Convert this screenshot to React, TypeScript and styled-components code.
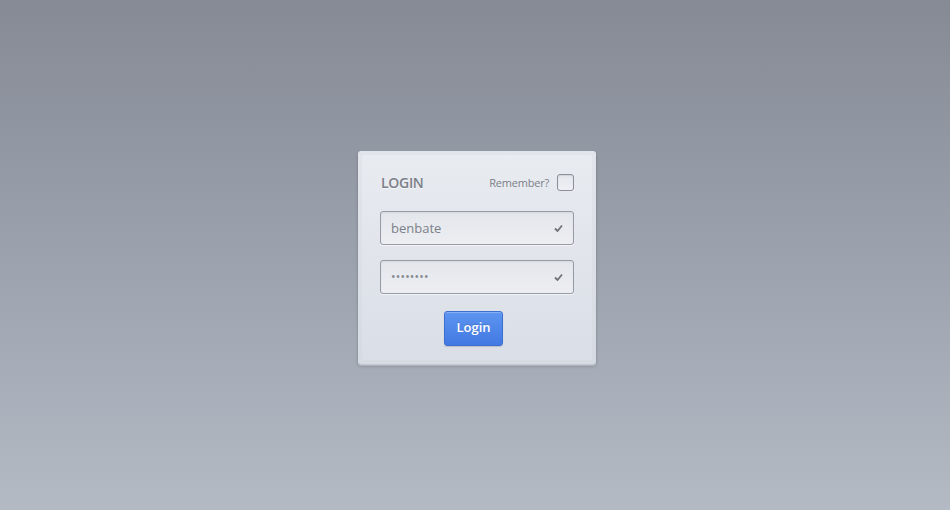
import React from "react";
import styled, { createGlobalStyle } from "styled-components";

const Global = createGlobalStyle`
  html, body { margin: 0; padding: 0; }
  body {
    width: 950px;
    height: 510px;
    overflow: hidden;
    font-family: "Open Sans", "DejaVu Sans", sans-serif;
    background: linear-gradient(180deg, #858a95 0%, #9ca2ad 50%, #b4bac4 100%);
  }
`;

const Page = styled.div`
  width: 950px;
  height: 510px;
  box-sizing: border-box;
  padding: 151px 0 0 358px;
`;

const Card = styled.div`
  width: 238px;
  height: 213px;
  box-sizing: border-box;
  padding: 4px;
  border-radius: 3px;
  background: linear-gradient(180deg, #e2e5eb 0%, #d6dae2 100%);
  box-shadow:
    0 1px 0 #c4c8d0,
    0 2px 0 #aeb3bc,
    0 2px 3px rgba(40, 45, 60, 0.35);
`;

const Inner = styled.form`
  height: 100%;
  box-sizing: border-box;
  padding: 19px 18px 14px;
  border-radius: 2px;
  background: linear-gradient(180deg, #e8ebf0 0%, #dadee6 100%);
  display: flex;
  flex-direction: column;
`;

const Header = styled.div`
  display: flex;
  align-items: center;
  justify-content: space-between;
  height: 17px;
  padding-left: 1px;
`;

const Title = styled.h1`
  margin: 0;
  font-size: 14px;
  font-weight: 600;
  color: #7b7f88;
  letter-spacing: -0.3px;
  text-shadow: 0 1px 0 rgba(255, 255, 255, 0.6);
`;

const Remember = styled.label`
  display: flex;
  align-items: center;
  gap: 8px;
  font-size: 11px;
  color: #7c8089;
  letter-spacing: -0.2px;
`;

const Box = styled.span`
  width: 15px;
  height: 15px;
  border: 1px solid #8a8f99;
  border-radius: 3px;
  background: linear-gradient(180deg, #e4e7ec, #eef0f4);
  box-shadow: inset 0 1px 1px rgba(0, 0, 0, 0.08);
`;

const Field = styled.div<{ $top: number }>`
  margin-top: ${(p) => p.$top}px;
  height: 34px;
  box-sizing: border-box;
  border: 1px solid #969ba5;
  border-radius: 3px;
  background: linear-gradient(180deg, #e3e6eb 0%, #eceef2 100%);
  box-shadow: inset 0 1px 2px rgba(0, 0, 0, 0.06), 0 1px 0 rgba(255, 255, 255, 0.6);
  display: flex;
  align-items: center;
  padding: 0 10px 0 10px;
`;

const Value = styled.span<{ $dots?: boolean }>`
  flex: 1;
  font-size: ${(p) => (p.$dots ? "12px" : "13px")};
  color: ${(p) => (p.$dots ? "#868a93" : "#7d818a")};
  letter-spacing: ${(p) => (p.$dots ? "0.2px" : "0")};
  padding-bottom: ${(p) => (p.$dots ? "1px" : "0")};
`;

const Check = styled.svg`
  width: 9px;
  height: 8px;
  color: #6e727b;
`;

const Actions = styled.div`
  margin-top: 17px;
  display: flex;
  padding-left: 64px;
`;

const Button = styled.button`
  width: 59px;
  height: 35px;
  box-sizing: border-box;
  border: 1px solid #3d6fd0;
  border-radius: 3px;
  background: linear-gradient(180deg, #5d95f0 0%, #4279e3 100%);
  box-shadow: inset 0 1px 0 rgba(255, 255, 255, 0.25), 0 1px 1px rgba(0, 0, 0, 0.15);
  color: #fff;
  font-family: "Open Sans", "DejaVu Sans", sans-serif;
  font-size: 13px;
  font-weight: 600;
  padding: 0 0 3px;
  text-shadow: 0 -1px 0 rgba(0, 0, 0, 0.15);
`;

const Tick = () => (
  <Check viewBox="0 0 9 8">
    <path d="M1 4.5 L3.5 7 L8 1.5" fill="none" stroke="currentColor" strokeWidth="1.8" />
  </Check>
);

export default function App() {
  return (
    <>
      <Global />
      <Page>
        <Card>
          <Inner onSubmit={(e) => e.preventDefault()}>
            <Header>
              <Title>LOGIN</Title>
              <Remember>
                Remember?
                <Box />
              </Remember>
            </Header>
            <Field $top={20}>
              <Value>benbate</Value>
              <Tick />
            </Field>
            <Field $top={15}>
              <Value $dots>••••••••</Value>
              <Tick />
            </Field>
            <Actions>
              <Button type="submit">Login</Button>
            </Actions>
          </Inner>
        </Card>
      </Page>
    </>
  );
}
